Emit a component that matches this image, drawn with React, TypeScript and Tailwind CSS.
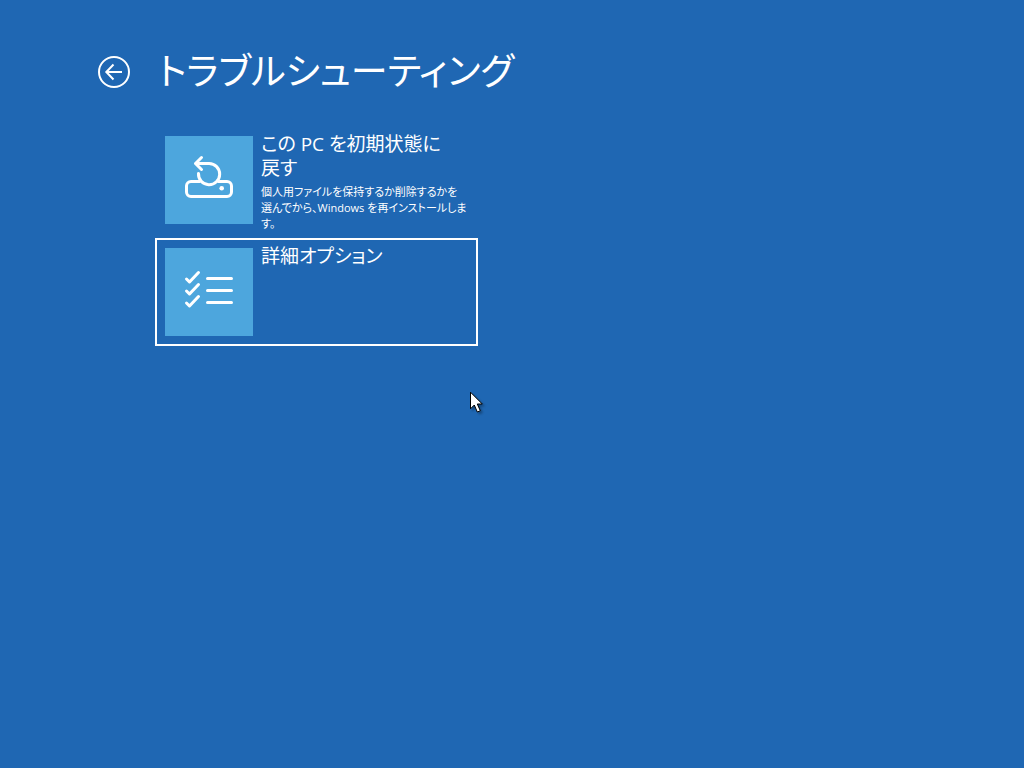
import type { ReactNode } from "react";

function ArrowLeftIcon() {
  return (
    <svg viewBox="0 0 32 32" className="size-8" fill="none" stroke="currentColor" strokeWidth="2" aria-hidden="true">
      <circle cx="16" cy="16" r="15" />
      <path d="M24 16H8.5M15.500 8.500L8.300 16l7.200 7.500" />
    </svg>
  );
}

function ResetIcon() {
  return (
    <svg
      viewBox="0 0 88 88"
      className="size-22"
      fill="none"
      stroke="currentColor"
      strokeWidth="3"
      strokeLinecap="round"
      strokeLinejoin="round"
      aria-hidden="true"
    >
      <path d="M34.5 45.5H26a4.500 4.500 0 0 0-4.500 4.500V56a4.500 4.500 0 0 0 4.500 4.500H62a4.500 4.500 0 0 0 4.500-4.500V50a4.500 4.500 0 0 0-4.500-4.500H53.500" />
      <path d="M33.500 37.500A10.600 10.600 0 1 0 44 27.500H31" />
      <path d="M36.500 21.500L30.500 27.500l6 6" />
      <circle cx="56.700" cy="52.300" r="2.300" fill="currentColor" stroke="none" />
    </svg>
  );
}

function ChecklistIcon() {
  return (
    <svg
      viewBox="0 0 88 88"
      className="size-22"
      fill="none"
      stroke="currentColor"
      strokeWidth="3"
      strokeLinecap="round"
      strokeLinejoin="round"
      aria-hidden="true"
    >
      <path d="M21.500 31l3 3L33.500 24.500M21.500 43l3 3L33.500 36.500M21.500 55l3 3L33.500 48.500" />
      <path d="M42.500 30.500H66.500M42.500 42.500H66.500M42.500 54.500H66.500" />
    </svg>
  );
}

function Tile({ icon, title, detail, focused }: { icon: ReactNode; title: ReactNode; detail?: ReactNode; focused?: boolean }) {
  return (
    <button
      type="button"
      className={`flex min-h-27 w-full items-start gap-2 border-2 px-2 pt-2 text-left outline-none ${focused ? "border-white" : "border-transparent"}`}
    >
      <span className="shrink-0 bg-[#4da6dd]">{icon}</span>
      <span className="-mt-1 block whitespace-nowrap">
        <span className="block text-[19px] leading-6">{title}</span>
        {detail && <span className="block pt-1 text-[11px] leading-4">{detail}</span>}
      </span>
    </button>
  );
}

function Pointer() {
  return (
    <svg viewBox="0 0 16 24" className="absolute top-[391px] left-[470px] h-6 w-4 drop-shadow-[2px_2px_1px_rgba(0,0,0,0.3)]" aria-hidden="true">
      <path d="M.5 1.200V17.800L4.300 14l3 7 3-1.300-3-6.700H12.300Z" fill="#fff" stroke="#000" strokeWidth="1" />
    </svg>
  );
}

export default function App() {
  return (
    <main className="relative min-h-screen bg-[#1f67b3] px-24 pt-10 font-['Open_Sans','Noto_Sans_CJK_JP',sans-serif] text-white [font-feature-settings:'palt']">
      <header className="flex h-16 items-center gap-7 pl-[2px]">
        <button type="button" aria-label="戻る" className="rounded-full">
          <ArrowLeftIcon />
        </button>
        <h1 className="pb-[2px] text-[37px] leading-15 whitespace-nowrap">トラブルシューティング</h1>
      </header>
      <div className="mt-[22px] ml-[59px] flex max-w-[323px] flex-col gap-1">
        <Tile
          icon={<ResetIcon />}
          title={<>この PC を初期状態に<br />戻す</>}
          detail={<>個人用ファイルを保持するか削除するかを<br />選んでから、Windows を再インストールしま<br />す。</>}
        />
        <Tile icon={<ChecklistIcon />} title="詳細オプション" focused />
      </div>
      <Pointer />
    </main>
  );
}
